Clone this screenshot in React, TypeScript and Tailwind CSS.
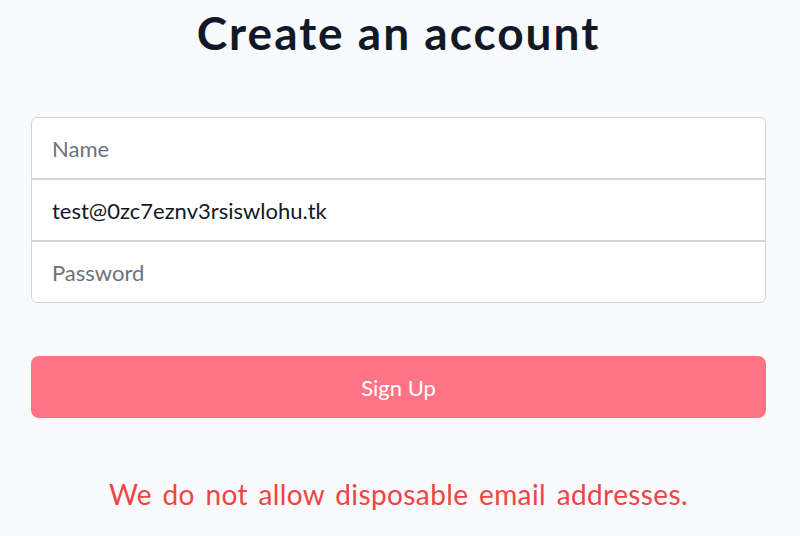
import React from "react";

export default function App() {
  return (
    <div className="min-h-[536px] w-[800px] bg-[#f9fafb] overflow-hidden" style={{ fontFamily: "Lato, 'Noto Sans', sans-serif" }}>
      <div className="pl-[31px] pr-[34px]">
        <h1 className="pt-[5px] h-[117px] text-center text-[46px] leading-[56px] font-bold text-[#111827] tracking-[2px]">
          Create an account
        </h1>
        <div className="flex flex-col">
          <input
            className="h-[62px] border border-[#d1d5db] rounded-t-md bg-white px-[20px] text-[22px] text-[#111827] placeholder:text-[#6b7280] outline-none"
            placeholder="Name"
          />
          <input
            className="h-[62px] border border-[#d1d5db] bg-white px-[20px] text-[22px] text-[#111827] placeholder:text-[#6b7280] outline-none"
            defaultValue="test@0zc7eznv3rsiswlohu.tk"
          />
          <input
            type="password"
            className="h-[62px] border border-[#d1d5db] rounded-b-md bg-white px-[20px] text-[22px] text-[#111827] placeholder:text-[#6b7280] outline-none"
            placeholder="Password"
          />
        </div>
        <button className="mt-[53px] w-full h-[62px] rounded-lg bg-[#fe7386] text-white text-[22px]">
          Sign Up
        </button>
        <p className="mt-[58px] text-center text-[28px] leading-[36px] text-[#ef4444] tracking-[0.4px] [word-spacing:3px]">
          We do not allow disposable email addresses.
        </p>
      </div>
    </div>
  );
}
